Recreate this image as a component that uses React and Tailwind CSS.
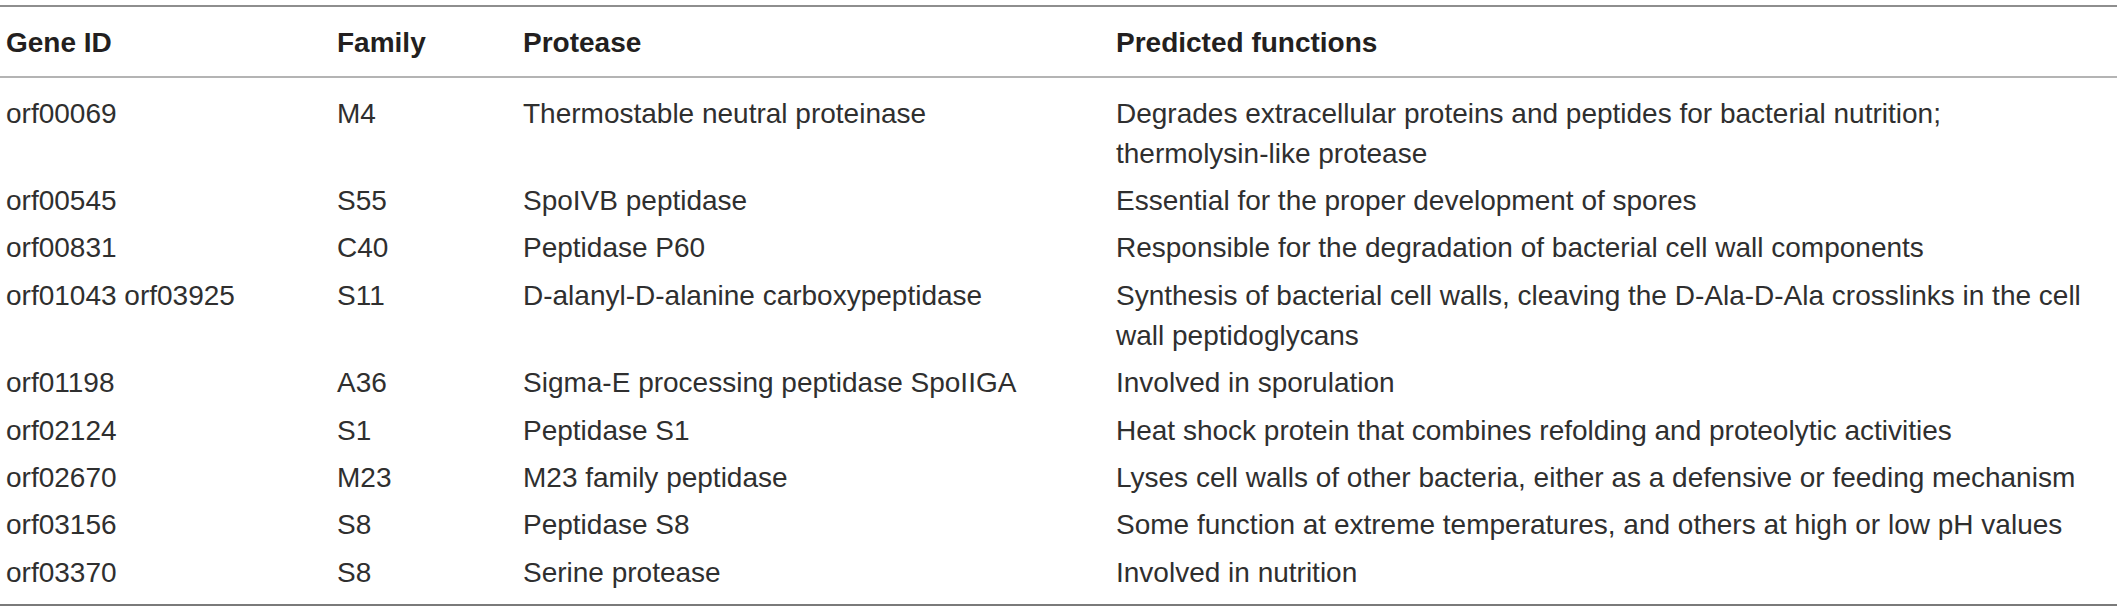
const rows = [
  ["orf00069", "M4", "Thermostable neutral proteinase", <>Degrades extracellular proteins and peptides for bacterial nutrition; <span className="whitespace-nowrap">thermolysin-like</span> protease</>],
  ["orf00545", "S55", "SpoIVB peptidase", "Essential for the proper development of spores"],
  ["orf00831", "C40", "Peptidase P60", "Responsible for the degradation of bacterial cell wall components"],
  ["orf01043 orf03925", "S11", "D-alanyl-D-alanine carboxypeptidase", "Synthesis of bacterial cell walls, cleaving the D-Ala-D-Ala crosslinks in the cell wall peptidoglycans"],
  ["orf01198", "A36", "Sigma-E processing peptidase SpoIIGA", "Involved in sporulation"],
  ["orf02124", "S1", "Peptidase S1", "Heat shock protein that combines refolding and proteolytic activities"],
  ["orf02670", "M23", "M23 family peptidase", "Lyses cell walls of other bacteria, either as a defensive or feeding mechanism"],
  ["orf03156", "S8", "Peptidase S8", "Some function at extreme temperatures, and others at high or low pH values"],
  ["orf03370", "S8", "Serine protease", "Involved in nutrition"],
];

const cols = "grid grid-cols-[331px_186px_593px_1fr]";

export default function App() {
  return (
    <div className="w-[2117px] h-[611px] bg-white font-['Liberation_Sans',Arial,sans-serif] text-[28px] leading-[40px]">
      <div className="pt-[5px]">
        <div className="border-t-2 border-[#8e8e8e]">
          <div className={`${cols} pl-[6px] pt-[16px] pb-[13px] font-bold text-[#231f20] border-b-2 border-[#b4b4b4]`}>
            <div>Gene ID</div>
            <div>Family</div>
            <div>Protease</div>
            <div>Predicted functions</div>
          </div>
          <div className="pt-[12px] pb-[8px] border-b-2 border-[#7a7a7a] text-[#2f2f2f]">
            {rows.map((r, i) => (
              <div key={i} className={`${cols} pl-[6px] pr-[10px] py-[3.7px]`}>
                <div>{r[0]}</div>
                <div>{r[1]}</div>
                <div>{r[2]}</div>
                <div>{r[3]}</div>
              </div>
            ))}
          </div>
        </div>
      </div>
    </div>
  );
}
